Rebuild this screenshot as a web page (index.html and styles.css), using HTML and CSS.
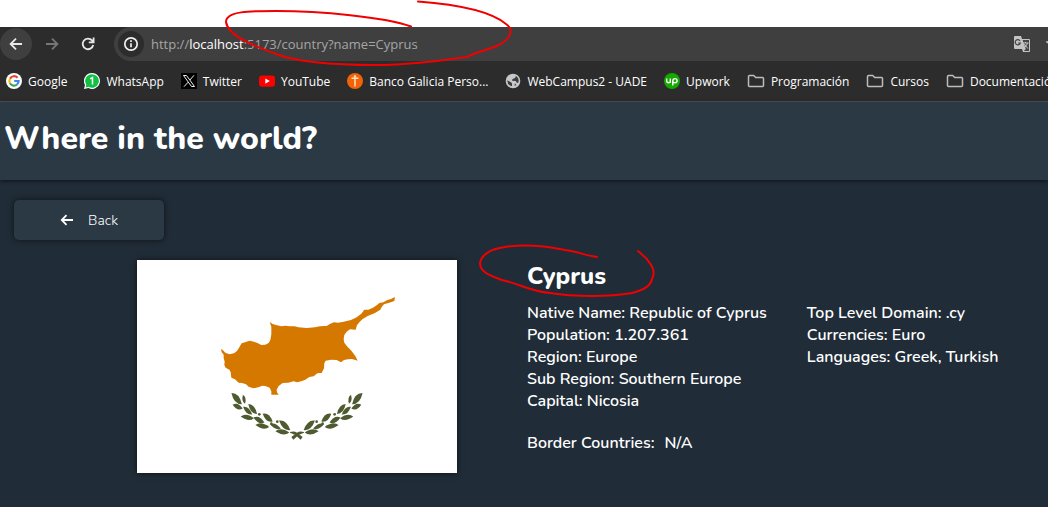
FILE: index.html
```html
<!DOCTYPE html>
<html lang="en">
<head>
<meta charset="utf-8">
<meta name="viewport" content="width=device-width, initial-scale=1">
<title>Where in the world?</title>
<link rel="stylesheet" href="styles.css">
</head>
<body>
<div class="browser">
  <div class="toolbar">
    <button class="nav-button nav-active" type="button" aria-label="Back"><svg width="16" height="16" viewBox="0 0 16 16" fill="none" stroke="#e8e8e8" stroke-width="1.8"><path d="M14 8H3M8 2.6 2.6 8 8 13.4"/></svg></button>
    <button class="nav-button" type="button" aria-label="Forward"><svg width="16" height="16" viewBox="0 0 16 16" fill="none" stroke="#777" stroke-width="1.8"><path d="M2 8h11M8 2.6 13.4 8 8 13.4"/></svg></button>
    <button class="nav-button" type="button" aria-label="Reload"><svg width="16" height="16" viewBox="0 0 16 16" fill="none" stroke="#e8e8e8" stroke-width="1.8"><path d="M13.2 9A5.3 5.3 0 1 1 12 4.4L13.4 6M13.6 1.6v4.8H8.8"/></svg></button>
    <div class="omnibox">
      <button class="site-info" type="button" aria-label="Site information"><svg width="16" height="16" viewBox="0 0 16 16" fill="none" stroke="#f1f1f1" stroke-width="1.7"><circle cx="8" cy="8" r="6.2"/><path d="M8 7.2v4M8 4.3v1.8"/></svg></button>
      <div class="address">http://<span class="host">localhost</span>:5173/country?name=Cyprus</div>
      <button class="tool" type="button" aria-label="Translate"><svg width="18" height="18" viewBox="0 0 18 18"><path d="M2 1h6l1 3h7q1 0 1 1v11q0 1-1 1h-6l-1-3H2q-1 0-1-1V2q0-1 1-1z" fill="#c4c4c4"/><path d="M9.6 5H16v11h-5.200l2-2z" fill="#444"/><path d="M7 5.800A2.600 2.600 0 1 0 7.300 8H5.200" fill="none" stroke="#444" stroke-width="1.200"/><path d="M10 8h5.500M12.500 6.800V8M14.600 8q-.8 3-3.400 4.500M11.300 9l3.500 4.500" fill="none" stroke="#c4c4c4"/></svg></button>
      <button class="tool" type="button" aria-label="Bookmark"><svg width="18" height="18" viewBox="0 0 18 18" fill="none" stroke="#c4c4c4" stroke-width="1.500"><path d="m9 2 2 5h6l-5 3.500 2 5.500-5-3.500L4 16l2-5.500L1 7h6z"/></svg></button>
    </div>
  </div>
  <nav class="bookmarks" aria-label="Bookmarks">
    <a href="#"><svg width="16" height="16" viewBox="0 0 16 16"><circle cx="8" cy="8" r="8" fill="#fff"/><g fill="none" stroke-width="2.200"><path d="M11.500 4.700A4.600 4.600 0 0 0 4 5.700" stroke="#ea4335"/><path d="M4 5.700a4.600 4.600 0 0 0 0 4.600" stroke="#fbbc05"/><path d="M4 10.300a4.600 4.600 0 0 0 7 1.200" stroke="#34a853"/><path d="M11 11.500A4.500 4.500 0 0 0 12.600 8H8.200" stroke="#4285f4"/></g></svg>Google</a>
    <a href="#"><svg width="16" height="16" viewBox="0 0 16 16"><path d="M8 0a8 8 0 1 1-3.700 15.100L0 16l1-4A8 8 0 0 1 8 0z" fill="#fff"/><path d="M8 1.200a6.800 6.800 0 1 1-3.500 12.600l-2.900.7.700-2.800A6.800 6.800 0 0 1 8 1.200z" fill="#10c143"/><path d="M6.200 5.800 8.500 4.500v7" fill="none" stroke="#fff" stroke-width="1.500"/></svg>WhatsApp</a>
    <a href="#"><svg width="16" height="16" viewBox="0 0 16 16"><path d="M0 0h16v16H0z"/><path d="M2.500 2.500h3l8 11h-3zM13 2.300 8.900 7M7.100 9.200 3 13.700" fill="none" stroke="#eee"/></svg>Twitter</a>
    <a href="#"><svg width="16" height="16" viewBox="0 0 16 16"><rect y="2.400" width="16" height="11.400" rx="3" fill="#f00"/><path d="m6.300 5.500 4.500 2.600-4.500 2.600z" fill="#fff"/></svg>YouTube</a>
    <a href="#"><svg width="16" height="16" viewBox="0 0 16 16"><circle cx="8" cy="8" r="8" fill="#f26207"/><path d="M8 2.500v11M4.500 5.300h7" stroke="#ffe0bd" stroke-width="1.500"/><circle cx="8" cy="3.500" r="1.200" fill="#ffe0bd"/></svg>Banco Galicia Perso...</a>
    <a href="#"><svg width="16" height="16" viewBox="0 0 16 16"><circle cx="8" cy="8" r="7.300" fill="#c5c7ca"/><path d="M2.200 7.300 6 9.300l1 1.200v2.800Q2.500 12.500 2.200 7.300zM9 2.300l2 1-1.300 2-2.200.8-.5 1.600 3.800.3 1.200 2 1.300-.5q1.200-4-1.600-6zM10 10.500l1.200 1-.8 1.300-1-.2z" fill="#3c3c3c"/></svg>WebCampus2 - UADE</a>
    <a href="#"><svg width="16" height="16" viewBox="0 0 16 16"><circle cx="8" cy="8" r="8" fill="#14a800"/><path d="M2.700 5.500v2.600q.1 1.700 1.800 1.700t1.800-1.700V5.500M6.300 7.500v2.300M8.800 12.500V7.800q.2-2.200 2.200-2.200t2.100 2.100q-.1 2.100-2.100 2.100-1.500 0-2.200-1.300" fill="none" stroke="#fff" stroke-width="1.400"/></svg>Upwork</a>
    <a href="#"><svg width="18" height="16" viewBox="0 0 18 16"><path d="M2.500 2.500h4.200l2 2h6.800q1 0 1 1v7q0 1-1 1h-13q-1 0-1-1v-9q0-1 1-1z" fill="none" stroke="#bcbcbc" stroke-width="1.500"/></svg>Programación</a>
    <a href="#"><svg width="18" height="16" viewBox="0 0 18 16"><path d="M2.500 2.500h4.200l2 2h6.800q1 0 1 1v7q0 1-1 1h-13q-1 0-1-1v-9q0-1 1-1z" fill="none" stroke="#bcbcbc" stroke-width="1.500"/></svg>Cursos</a>
    <a href="#"><svg width="18" height="16" viewBox="0 0 18 16"><path d="M2.500 2.500h4.200l2 2h6.800q1 0 1 1v7q0 1-1 1h-13q-1 0-1-1v-9q0-1 1-1z" fill="none" stroke="#bcbcbc" stroke-width="1.500"/></svg>Documentació</a>
  </nav>
</div>
<header class="site-header"><h1>Where in the world?</h1></header>
<main class="page">
  <button class="back" type="button"><svg width="14" height="14" viewBox="0 0 14 14" fill="none" stroke="#fff" stroke-width="1.800"><path d="M13 7H2M6.500 2.200 1.800 7l4.700 4.800"/></svg>Back</button>
  <div class="country">
    <svg class="flag" viewBox="0 0 320 213" role="img" aria-label="Flag of Cyprus">
      <defs>
        <path id="leaf" d="M-1 0Q-.3-1 1 0Q.3 1-1 0z"/>
        <g id="branch">
          <use href="#leaf" transform="translate(50 56) rotate(47) scale(23 18)"/>
          <use href="#leaf" transform="translate(72 58) rotate(77) scale(14 10)"/>
          <use href="#leaf" transform="translate(53 80) rotate(20) scale(16 15)"/>
          <use href="#leaf" transform="translate(98 87) rotate(49) scale(20 15)"/>
          <use href="#leaf" transform="translate(83 92) rotate(40) scale(18 14)"/>
          <use href="#leaf" transform="translate(82 112) rotate(7) scale(20 15)"/>
          <use href="#leaf" transform="translate(117 120) rotate(24) scale(18 15)"/>
          <use href="#leaf" transform="translate(143 113) rotate(38) scale(19 16)"/>
          <use href="#leaf" transform="translate(127 138) rotate(8) scale(21 15)"/>
          <use href="#leaf" transform="translate(166 139) rotate(22) scale(18 13)"/>
          <use href="#leaf" transform="translate(194 136) rotate(40) scale(22 17)"/>
          <use href="#leaf" transform="translate(187 156) rotate(5) scale(21 15)"/>
          <circle cx="118" cy="103" r="4"/><circle cx="154" cy="130" r="3.500"/><circle cx="172" cy="125" r="4"/>
          <path d="M210 156q13-4 21 2l17 13-6 8-16-14-16-7z"/>
        </g>
      </defs>
      <path d="M0 0h320v213H0z" fill="#fff"/>
      <g transform="translate(63 20) scale(.3333)">
        <path fill="#d57800" d="M63 207 69 211 76 218 88 223 102 220 111 213 118 202 125 190 135 187 149 182 162 185 174 190 184 195 196 194 206 189 211 180 214 163 214 140 209 126 218 132 228 135 244 139 256 137 269 139 284 139 295 142 320 144 345 142 360 139 373 138 380 138 391 131 402 127 414 128 431 125 453 120 470 112 484 101 493 89 505 89 519 83 531 75 538 69 550 67 562 60 573 57 585 51 583 63 568 68 552 73 545 81 541 89 525 99 516 103 503 108 487 118 478 127 471 136 467 149 450 148 440 155 433 165 431 178 433 188 441 199 454 212 466 228 473 242 456 237 444 238 432 240 423 247 410 240 393 239 377 242 373 250 372 265 365 279 352 280 341 289 328 291 316 299 304 304 291 307 281 304 265 308 248 309 236 318 230 329 231 337 236 344 214 344 214 334 209 323 198 319 187 317 175 322 160 325 146 320 138 313 126 309 116 308 105 298 94 293 92 276 88 269 77 263 73 255 74 245 71 234 71 224 65 217Z"/>
        <g transform="translate(60 300)" fill="#4e5b31"><use href="#branch"/><use href="#branch" transform="translate(462 0) scale(-1 1)"/></g>
      </g>
    </svg>
    <section class="details">
      <h2>Cyprus</h2>
      <div class="facts">
        <ul>
          <li>Native Name: Republic of Cyprus</li>
          <li>Population: 1.207.361</li>
          <li>Region: Europe</li>
          <li>Sub Region: Southern Europe</li>
          <li>Capital: Nicosia</li>
        </ul>
        <ul>
          <li>Top Level Domain: .cy</li>
          <li>Currencies: Euro</li>
          <li>Languages: Greek, Turkish</li>
        </ul>
      </div>
      <p class="borders"><span>Border Countries:</span><span>N/A</span></p>
    </section>
  </div>
</main>
<svg class="marks" width="1048" height="507" viewBox="0 0 1048 507" aria-hidden="true">
  <path d="M411 26.500C385 17 320 11 276 11 250 11 226 11 226 22 228 37 260 48 276 54 300 63 335 65 375 65 413 65 442 60 467 57 476 52 488 50 499 45 513 37 513 29 506 24 493 13 464 5 418 1.500"/>
  <path d="M597 257C586 256 577 251 565 250 545 246 524 244 505 247 489 249 481 256 480 263 480 273 492 276 502 280 520 284 529 291 550 293 574 297 610 297 632 293 644 290 651 285 652 279 657 270 649 262 646 258 643 256 642 254 638 251"/>
</svg>
</body>
</html>
```
FILE: styles.css
```css
* { box-sizing: border-box; }
body {
  margin: 0;
  min-height: 100vh;
  position: relative;
  overflow-x: hidden;
  background: #202c37;
  color: #fff;
  font-family: Nunito, Lato, sans-serif;
}
button { border: 0; padding: 0; background: none; color: inherit; font: inherit; }
svg { display: block; flex-shrink: 0; }
ul, h1, h2, p { margin: 0; padding: 0; }
ul { list-style: none; }

.browser {
  padding-top: 27px;
  background: linear-gradient(#fff 27px, #2c2c2c 27px);
  border-bottom: 1px solid #555;
  font-family: "Segoe UI", "Open Sans", sans-serif;
  overflow: hidden;
}
.toolbar { display: flex; align-items: center; height: 34px; background: #2c2c2c; }
.nav-button {
  display: grid;
  place-items: center;
  flex: 0 0 32px;
  height: 32px;
  margin-right: 4px;
  border-radius: 50%;
}
.nav-active { background: #3f3f3f; }
.omnibox {
  display: flex;
  align-items: center;
  flex: 1;
  height: 34px;
  margin: 0 -24px 0 6px;
  padding: 0 8px 0 4px;
  border-radius: 17px;
  background: #3f3f3f;
}
.site-info {
  display: grid;
  place-items: center;
  width: 26px;
  height: 26px;
  border-radius: 50%;
  background: #2c2c2c;
}
.address { flex: 1; margin-left: 7px; font-size: 13px; color: #a5a5a5; white-space: nowrap; }
.host { color: #fff; }
.tool { margin-left: 15px; }
.bookmarks { display: flex; align-items: center; gap: 17px; height: 40px; padding-left: 6px; }
.bookmarks a {
  display: flex;
  align-items: center;
  gap: 6px;
  color: #fff;
  font-size: 12px;
  text-decoration: none;
  white-space: nowrap;
}
.site-header {
  padding: 16px 4px 20px;
  background: #2b3945;
  box-shadow: 0 1px 4px rgba(0, 0, 0, .6);
}
h1 { font-size: 32px; line-height: 42px; font-weight: 800; }
.page { padding: 20px 14px; }
.back {
  display: flex;
  align-items: center;
  justify-content: center;
  gap: 14px;
  width: 150px;
  height: 40px;
  border-radius: 5px;
  background: #2b3945;
  box-shadow: 0 0 6px rgba(0, 0, 0, .6);
  font-size: 14px;
  font-weight: 300;
}
.country { display: flex; align-items: flex-start; gap: 70px; padding: 20px 0 0 123px; }
.flag { width: 320px; box-shadow: 0 0 6px rgba(0, 0, 0, .6); }
h2 { font-size: 24px; line-height: 32px; font-weight: 800; }
.facts { display: flex; gap: 40px; margin: 10px 0 20px; }
.details { font-size: 16px; line-height: 22px; font-weight: 600; white-space: nowrap; }
.borders { display: flex; gap: 10px; }
.marks {
  position: absolute;
  top: 0;
  left: 0;
  fill: none;
  stroke: #f00000;
  stroke-width: 2;
  stroke-linecap: round;
  pointer-events: none;
}
```
